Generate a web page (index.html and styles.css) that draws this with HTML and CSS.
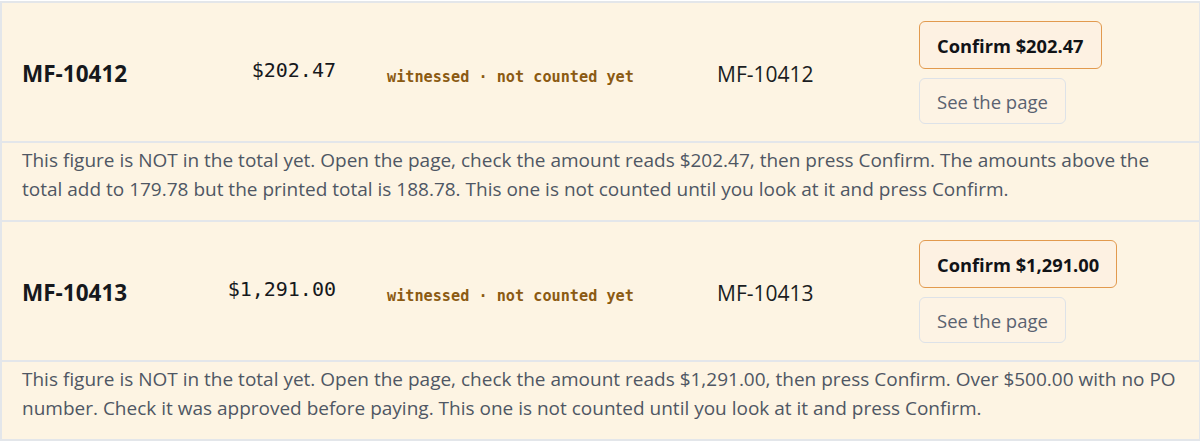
FILE: index.html
```html
<!DOCTYPE html>
<html>
<head>
<meta charset="utf-8">
<link rel="stylesheet" href="styles.css">
</head>
<body>
<table class="ledger">
  <colgroup>
    <col class="c-id"><col class="c-amt"><col class="c-state"><col class="c-ref"><col class="c-act">
  </colgroup>
  <tbody>
    <tr class="main">
      <td class="id">MF-10412</td>
      <td class="amt">$202.47</td>
      <td class="state"><span class="badge">witnessed · not counted yet</span></td>
      <td class="ref">MF-10412</td>
      <td class="act">
        <div class="btns">
          <button class="btn confirm">Confirm $202.47</button>
          <button class="btn see">See the page</button>
        </div>
      </td>
    </tr>
    <tr class="detail">
      <td colspan="5">This figure is NOT in the total yet. Open the page, check the amount reads $202.47, then press Confirm. The amounts above the total add to 179.78 but the printed total is 188.78. This one is not counted until you look at it and press Confirm.</td>
    </tr>
    <tr class="main">
      <td class="id">MF-10413</td>
      <td class="amt">$1,291.00</td>
      <td class="state"><span class="badge">witnessed · not counted yet</span></td>
      <td class="ref">MF-10413</td>
      <td class="act">
        <div class="btns">
          <button class="btn confirm">Confirm $1,291.00</button>
          <button class="btn see">See the page</button>
        </div>
      </td>
    </tr>
    <tr class="detail">
      <td colspan="5">This figure is NOT in the total yet. Open the page, check the amount reads $1,291.00, then press Confirm. Over $500.00 with no PO number. Check it was approved before paying. This one is not counted until you look at it and press Confirm.</td>
    </tr>
  </tbody>
</table>
</body>
</html>
```
FILE: styles.css
```css
html, body {
  margin: 0;
  padding: 0;
  background: #ffffff;
}
body {
  padding-top: 1px;
  font-family: "Open Sans", "Noto Sans", sans-serif;
  color: #1f2328;
}
.ledger {
  width: 1199px;
  border-collapse: collapse;
  table-layout: fixed;
  background: #fdf4e3;
}
.c-id { width: 204px; }
.c-amt { width: 151px; }
.c-state { width: 343px; }
.c-ref { width: 200px; }
.c-act { width: 301px; }
.ledger td {
  border-top: 2px solid #e3e6ea;
  border-bottom: 2px solid #e3e6ea;
  vertical-align: middle;
}
.ledger td:first-child {
  border-left: 2px solid #e3e6ea;
}
.ledger td:last-child {
  border-right: 2px solid #e3e6ea;
}
.main td {
  padding: 18px 20px 17px 20px;
}
.main td.id {
  font-weight: 700;
  font-size: 22.5px;
  color: #16181c;
  padding-top: 20px;
}
.main td.amt {
  text-align: right;
  font-family: "DejaVu Sans Mono", "Liberation Mono", monospace;
  font-size: 20px;
  color: #16181c;
  padding-bottom: 22px;
}
.main td.state {
  padding-left: 31px;
  padding-right: 0;
  padding-top: 24px;
}
.badge {
  font-family: "DejaVu Sans Mono", "Liberation Mono", monospace;
  font-weight: 700;
  font-size: 15.2px;
  color: #8b5a12;
  white-space: nowrap;
}
.main td.ref {
  font-size: 21px;
  font-weight: 400;
  color: #1b1d22;
  padding-top: 20px;
  padding-left: 18px;
}
.btns {
  display: flex;
  flex-direction: column;
  align-items: flex-start;
  gap: 9px;
}
.btn {
  font-family: "Open Sans", "Noto Sans", sans-serif;
  border-radius: 6px;
  background: #fdf1e2;
  cursor: pointer;
  padding: 0 17px;
}
.btn.confirm {
  height: 48px;
  border: 1.5px solid #e29a4e;
  font-weight: 700;
  font-size: 18.3px;
  color: #111317;
}
.btn.see {
  height: 46px;
  border: 1.5px solid #dde2e8;
  font-size: 18.5px;
  color: #5a6270;
  background: #fdf3e4;
}
.detail td {
  padding: 3px 20px 16px 20px;
  font-size: 19px;
  line-height: 29px;
  color: #4f5763;
}
```
